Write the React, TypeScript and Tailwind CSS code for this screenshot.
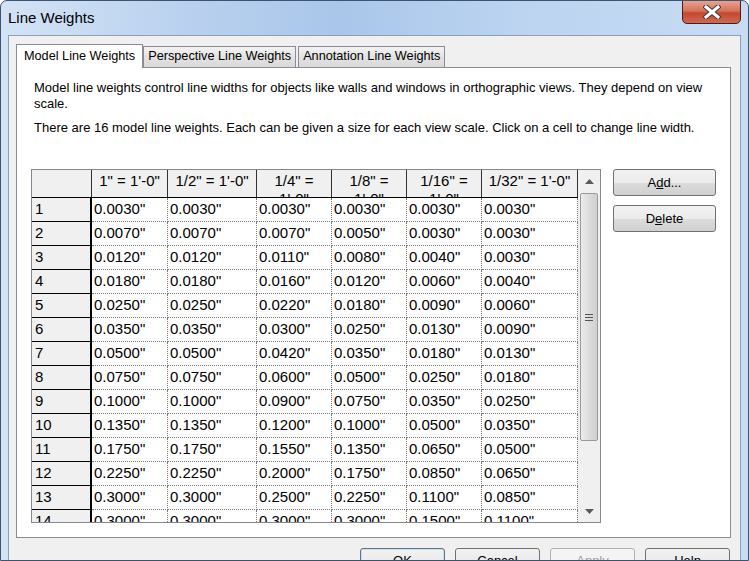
import React from 'react';

// Header labels for each view scale
const scales = [
  '1" = 1\'-0"',
  '1/2" = 1\'-0"',
  '1/4" = 1\'-0"',
  '1/8" = 1\'-0"',
  '1/16" = 1\'-0"',
  '1/32" = 1\'-0"',
];

const colWidths = ['w-[76px]', 'w-[89px]', 'w-[75px]', 'w-[75px]', 'w-[75px]', 'w-[96px]'];

// Line weight table, one row per pen number
const weights: string[][] = [
  ['0.0030', '0.0030', '0.0030', '0.0030', '0.0030', '0.0030'],
  ['0.0070', '0.0070', '0.0070', '0.0050', '0.0030', '0.0030'],
  ['0.0120', '0.0120', '0.0110', '0.0080', '0.0040', '0.0030'],
  ['0.0180', '0.0180', '0.0160', '0.0120', '0.0060', '0.0040'],
  ['0.0250', '0.0250', '0.0220', '0.0180', '0.0090', '0.0060'],
  ['0.0350', '0.0350', '0.0300', '0.0250', '0.0130', '0.0090'],
  ['0.0500', '0.0500', '0.0420', '0.0350', '0.0180', '0.0130'],
  ['0.0750', '0.0750', '0.0600', '0.0500', '0.0250', '0.0180'],
  ['0.1000', '0.1000', '0.0900', '0.0750', '0.0350', '0.0250'],
  ['0.1350', '0.1350', '0.1200', '0.1000', '0.0500', '0.0350'],
  ['0.1750', '0.1750', '0.1550', '0.1350', '0.0650', '0.0500'],
  ['0.2250', '0.2250', '0.2000', '0.1750', '0.0850', '0.0650'],
  ['0.3000', '0.3000', '0.2500', '0.2250', '0.1100', '0.0850'],
  ['0.3000', '0.3000', '0.3000', '0.3000', '0.1500', '0.1100'],
];

const btn =
  'flex items-center justify-center rounded-[3px] border border-[#707070] bg-[linear-gradient(to_bottom,#f2f2f2_0%,#ebebeb_50%,#dddddd_51%,#cfcfcf_100%)] text-[13px] text-black';

const Tab: React.FC<{ label: string; active?: boolean }> = ({ label, active }) =>
  active ? (
    <div className="relative z-10 -mb-px flex h-[24px] items-center border border-b-0 border-[#898c95] bg-white px-[7px] text-[12.7px]">
      {label}
    </div>
  ) : (
    <div className="flex h-[21px] items-center border border-b-0 border-l-0 border-[#898c95] bg-[linear-gradient(to_bottom,#f3f3f3,#e3e3e3_50%,#d9d9d9)] px-[4px] text-[12.7px]">
      {label}
    </div>
  );

const ScrollBar: React.FC = () => (
  <div className="flex w-[22px] flex-col bg-[#f0f0f0]">
    <div className="flex h-[22px] items-center justify-center">
      <svg width="9" height="5" viewBox="0 0 9 5">
        <path d="M0 5 L4.5 0 L9 5 Z" fill="#5a5a5a" />
      </svg>
    </div>
    <div className="mx-[2px] mt-[1px] flex h-[248px] items-center justify-center rounded-[2px] border border-[#9a9a9a] bg-[linear-gradient(to_right,#ececec,#dcdcdc_50%,#cfcfcf)]">
      <div className="flex flex-col gap-[2px]">
        <div className="h-[1px] w-[8px] bg-[#555]" />
        <div className="h-[1px] w-[8px] bg-[#555]" />
        <div className="h-[1px] w-[8px] bg-[#555]" />
      </div>
    </div>
    <div className="flex-1" />
    <div className="flex h-[22px] items-center justify-center">
      <svg width="9" height="5" viewBox="0 0 9 5">
        <path d="M0 0 L4.5 5 L9 0 Z" fill="#5a5a5a" />
      </svg>
    </div>
  </div>
);

const WeightsTable: React.FC = () => (
  <div className="flex h-[354px] w-[570px] border border-[#828790] bg-white">
    <div className="w-[546px] overflow-hidden">
      <div className="flex h-[28px] border-b border-black bg-[#f0f0f0]">
        <div className="w-[60px] border-r border-[#303030]" />
        {scales.map((s, i) => (
          <div
            key={s}
            className={`${colWidths[i]} overflow-hidden border-r border-[#303030] px-[3px] pt-[2px] text-center text-[15px] leading-[18px]`}
          >
            {s}
          </div>
        ))}
      </div>
      {weights.map((row, r) => (
        <div key={r} className="flex h-[24px]">
          <div className="flex w-[60px] items-center border-b border-r-2 border-black bg-[#f0f0f0] pb-[1px] pl-[3px] text-[15px]">
            {r + 1}
          </div>
          {row.map((v, c) => (
            <div
              key={c}
              className={`${colWidths[c]} flex items-center border-b border-r border-dotted border-[#7a7a7a] pb-[1px] pl-[2px] text-[15px]`}
            >
              {v}"
            </div>
          ))}
        </div>
      ))}
    </div>
    <ScrollBar />
  </div>
);

export default function App() {
  return (
    <div className="relative h-[561px] w-[749px] overflow-hidden rounded-t-[7px] border border-[#3e5370] bg-[linear-gradient(to_right,#d3e3f5_0%,#b9d1ee_25%,#a9c6ea_45%,#bcd4f0_70%,#c7dcf3_100%)] font-['Liberation_Sans',sans-serif] text-black">
      {/* Title bar */}
      <div className="flex h-[34px] items-center pl-[7px] text-[15px]">Line Weights</div>
      <div className="absolute right-[7px] top-[-1px] flex h-[24px] w-[59px] items-center justify-center rounded-b-[5px] border border-[#4e1b15] bg-[linear-gradient(to_bottom,#e6a291_0%,#d6725c_45%,#c5472f_55%,#cf6a50_100%)]">
        <svg width="18" height="14" viewBox="0 0 18 14">
          <path d="M3 2 L15 12 M15 2 L3 12" stroke="#3d3d3d" strokeWidth="5" strokeLinecap="square" />
          <path d="M3 2 L15 12 M15 2 L3 12" stroke="#ffffff" strokeWidth="3" strokeLinecap="square" />
        </svg>
      </div>

      {/* Client area */}
      <div className="mx-[7px] h-[600px] border border-[#8aa0bb] bg-[#f0f0f0] pl-[7px] pr-[9px] pt-[8px]">
        <div className="flex items-end">
          <Tab label="Model Line Weights" active />
          <div className="flex items-end border-l border-[#898c95]">
            <Tab label="Perspective Line Weights" />
            <div className="w-[2px]" />
            <div className="border-l border-[#898c95]">
              <Tab label="Annotation Line Weights" />
            </div>
          </div>
        </div>
        <div className="h-[471px] w-[715px] border border-[#898c95] bg-white px-[14px] pt-[12px]">
          <div className="pl-[3px] pr-[10px] text-[13px] leading-[16px]">
            <p>
              Model line weights control line widths for objects like walls and windows in orthographic views. They
              depend on view scale.
            </p>
            <p className="mt-[8px]">
              There are 16 model line weights. Each can be given a size for each view scale. Click on a cell to change
              line width.
            </p>
          </div>
          <div className="mt-[33px] flex gap-[12px]">
            <WeightsTable />
            <div className="flex flex-col gap-[9px]">
              <button className={`${btn} h-[27px] w-[103px]`}>
                A<span className="underline">d</span>d...
              </button>
              <button className={`${btn} h-[27px] w-[103px]`}>
                D<span className="underline">e</span>lete
              </button>
            </div>
          </div>
        </div>
        <div className="mt-[10px] flex justify-end gap-[10px] pr-[1px]">
          <button className={`${btn} h-[26px] w-[85px] border-[#3c7fb1] shadow-[inset_0_0_0_1px_#b9e4fb]`}>OK</button>
          <button className={`${btn} h-[26px] w-[85px]`}>Cancel</button>
          <button className="flex h-[26px] w-[85px] items-center justify-center rounded-[3px] border border-[#adb2b5] bg-[#f4f4f4] text-[13px] text-[#a0a0a0]">
            Apply
          </button>
          <button className={`${btn} h-[26px] w-[85px]`}>Help</button>
        </div>
      </div>
    </div>
  );
}
